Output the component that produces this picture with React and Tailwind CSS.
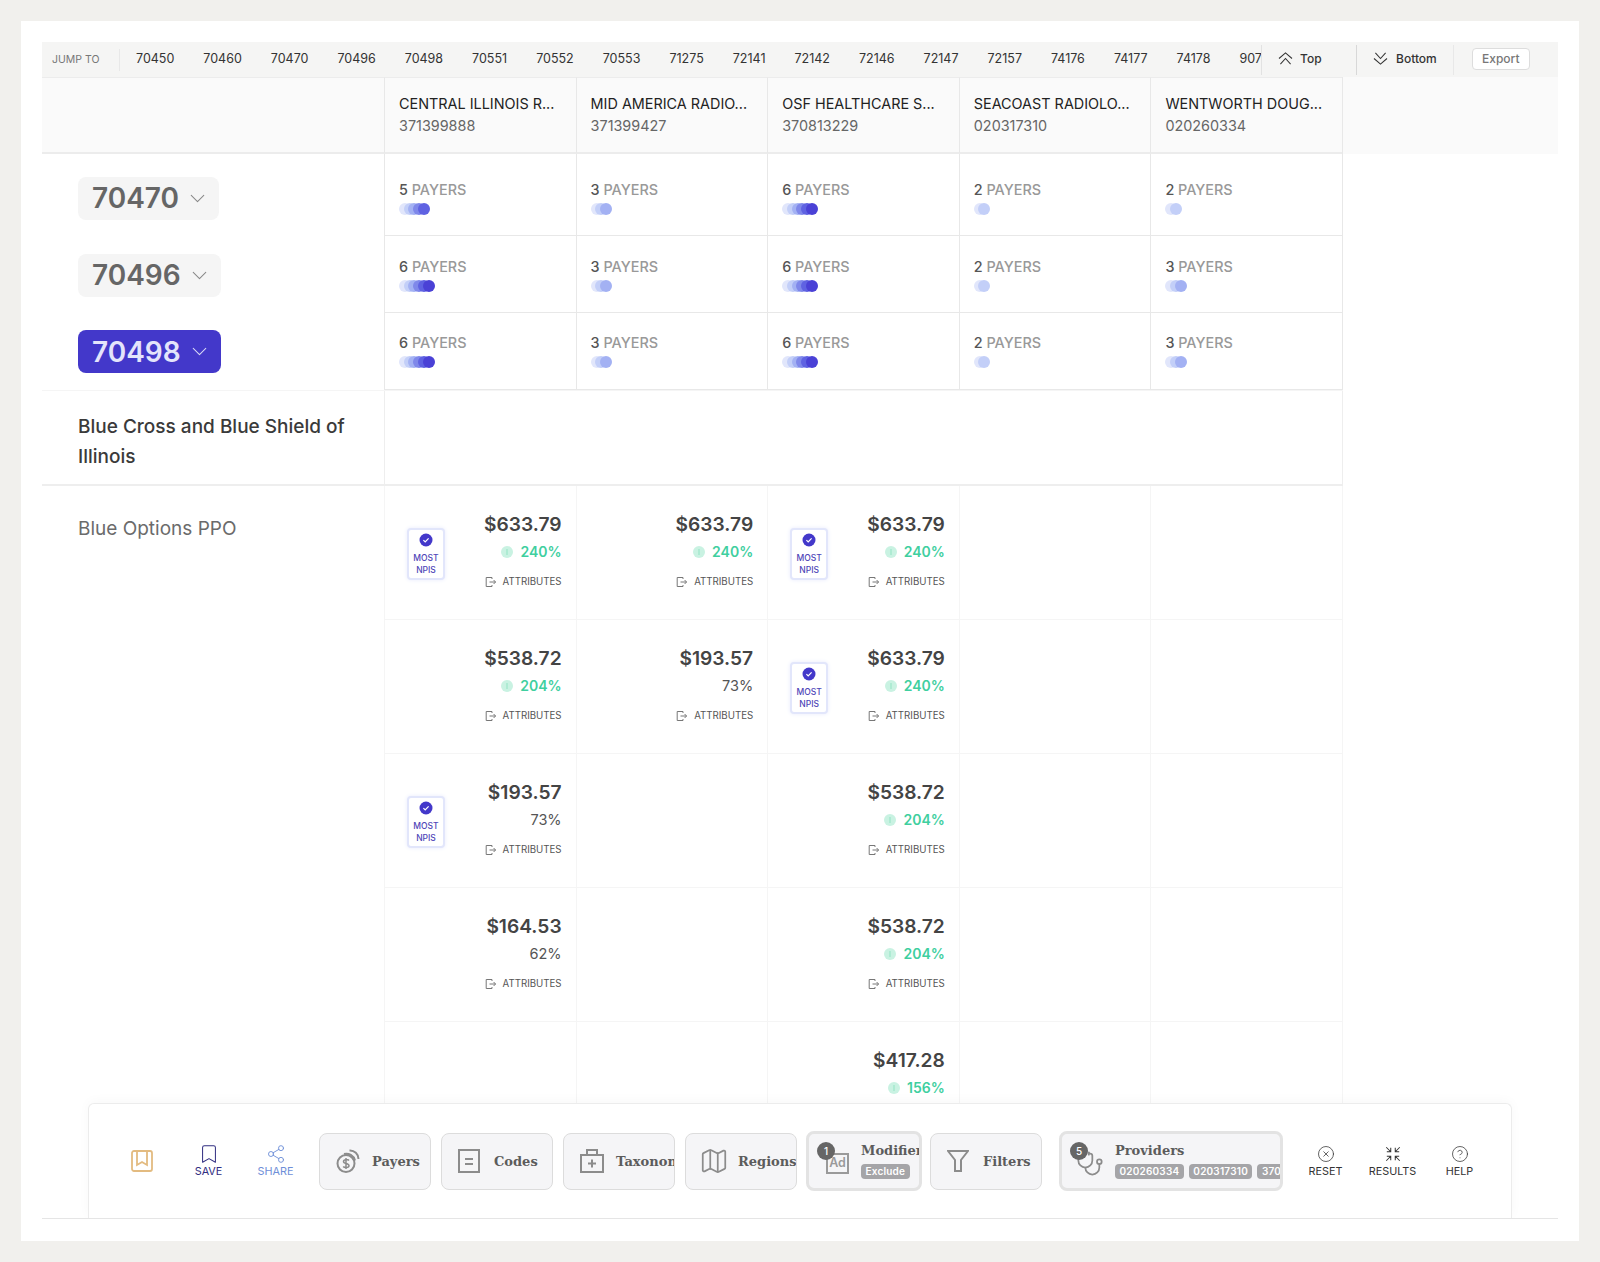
import React from "react";
import {
  Bookmark,
  ChevronDown,
  CircleHelp,
  CircleX,
  Map,
  Share2,
  Stethoscope,
} from "lucide-react";

const jumpCodes = [
  "70450", "70460", "70470", "70496", "70498", "70551", "70552", "70553", "71275", "72141",
  "72142", "72146", "72147", "72157", "74176", "74177", "74178", "90714",
];

const providers = [
  { name: "CENTRAL ILLINOIS R...", tin: "371399888" },
  { name: "MID AMERICA RADIO...", tin: "371399427" },
  { name: "OSF HEALTHCARE S...", tin: "370813229" },
  { name: "SEACOAST RADIOLO...", tin: "020317310" },
  { name: "WENTWORTH DOUG...", tin: "020260334" },
];

const codeRows = [
  { code: "70470", width: "w-[141px]", payers: [5, 3, 6, 2, 2], height: "h-[82px]", pillPad: "pt-[6px]", cellPad: "pt-[25px]" },
  { code: "70496", width: "w-[143px]", payers: [6, 3, 6, 2, 3], height: "h-[77px]", pillPad: "pt-[1px]", cellPad: "pt-[20px]" },
  { code: "70498", width: "w-[143px]", payers: [6, 3, 6, 2, 3], height: "h-[77px]", pillPad: "", cellPad: "pt-[19px]", active: true },
];

// one entry per column, null means no rate
const rates = [
  [
    { price: "$633.79", pct: "240%", good: true, npis: true },
    { price: "$633.79", pct: "240%", good: true },
    { price: "$633.79", pct: "240%", good: true, npis: true },
    null,
    null,
  ],
  [
    { price: "$538.72", pct: "204%", good: true },
    { price: "$193.57", pct: "73%" },
    { price: "$633.79", pct: "240%", good: true, npis: true },
    null,
    null,
  ],
  [
    { price: "$193.57", pct: "73%", npis: true },
    null,
    { price: "$538.72", pct: "204%", good: true },
    null,
    null,
  ],
  [
    { price: "$164.53", pct: "62%" },
    null,
    { price: "$538.72", pct: "204%", good: true },
    null,
    null,
  ],
  [null, null, { price: "$417.28", pct: "156%", good: true }, null, null],
];

const dotColors = [
  "bg-[#e1e6fb]",
  "bg-[#c3cff8]",
  "bg-[#a3b1f3]",
  "bg-[#7f88ea]",
  "bg-[#5f62e2]",
  "bg-[#4a41d6]",
];

const PayerDots = ({ count }) => (
  <div className="flex h-3">
    {dotColors.slice(0, count).map((color, i) => (
      <span key={i} className={`h-3 w-3 rounded-full ${color} ${i > 0 ? "-ml-[7.3px]" : ""}`} />
    ))}
  </div>
);

const RateCell = ({ rate }) => {
  if (!rate) return <div className="h-[134px] w-[191.6px] shrink-0 border-b border-l border-[#f5f5f5]" />;
  return (
    <div className="relative flex h-[134px] w-[191.6px] shrink-0 flex-col items-end border-b border-l border-[#f5f5f5] pt-[23px] pr-[14px]">
      {rate.npis && (
        <div className="absolute top-[42px] left-[22px] flex h-[52px] w-[38px] flex-col items-center rounded border-2 border-[#e2e6fb] bg-white pt-[3px] text-[8.5px] leading-[12px] font-medium text-[#4f46b8] shadow-[0_0_4px_#e8ebfc]">
          <svg viewBox="0 0 14 14" className="mb-[5px] h-[14px] w-[14px]">
            <circle cx="7" cy="7" r="6.5" fill="#4338ca" />
            <path d="M4.4 7.2l1.8 1.8 3.4-3.6" fill="none" stroke="#fff" strokeWidth="1.2" />
          </svg>
          <span>MOST</span>
          <span>NPIS</span>
        </div>
      )}
      <div className="text-[19.2px] leading-[30px] font-semibold text-[#444444]">{rate.price}</div>
      <div
        className={`mt-[1.5px] flex h-[22px] items-center gap-[7px] ${
          rate.good ? "text-[14px] font-semibold text-[#3fcf9f]" : "text-[14.5px] text-[#555555]"
        }`}
      >
        {rate.good && (
          <span className="flex h-[12px] w-[12px] items-center justify-center rounded-full bg-[#c9f2e2]">
            <span className="h-[6px] w-[2px] bg-[#aeebd3]" />
          </span>
        )}
        {rate.pct}
      </div>
      <div className="mt-[12.5px] flex items-center gap-[7px] text-[9.7px] leading-[14px] text-[#555555]">
        <svg viewBox="0 0 12 12" className="h-[12px] w-[12px]" fill="none" stroke="#777777" strokeWidth="1">
          <path d="M8 3V1.500H2.200v9H8V9" />
          <path d="M5.500 6h6M9.600 4l2 2-2 2" />
        </svg>
        ATTRIBUTES
      </div>
    </div>
  );
};

const ToolButton = ({ icon, label }) => (
  <div className="flex h-[57px] w-[112px] shrink-0 items-center overflow-hidden rounded-lg border border-[#dcdcdc] bg-[#f5f5f7] pl-[16px] font-['DejaVu_Serif',serif] text-[13px] font-bold text-[#5c5c5c]">
    <span className="flex w-[36px] shrink-0">{icon}</span>
    <span className="mt-[1px] whitespace-nowrap">{label}</span>
  </div>
);

const SmallAction = ({ icon, label, color }) => (
  <div className={`flex w-[67px] shrink-0 flex-col items-center text-[10.8px] leading-[14px] ${color}`}>
    <span className={label ? "flex h-[21px] items-center" : "flex items-center"}>{icon}</span>
    {label}
  </div>
);

const Badge = ({ n }) => (
  <span className="absolute top-[8px] left-[8px] z-10 flex h-[18px] w-[18px] items-center justify-center rounded-full bg-[#666666] font-['Inter',sans-serif] text-[10px] font-medium text-white">
    {n}
  </span>
);

const Tag = ({ children }) => (
  <span className="shrink-0 rounded-sm bg-[#a5a5a8] px-[4.5px] font-['Inter',sans-serif] text-[10px] leading-[15px] font-semibold tracking-[0.2px] text-white">
    {children}
  </span>
);

const App = () => {
  return (
    <div className="h-[1262px] w-[1600px] bg-[#f1f0ed] p-[21px] font-['Inter',sans-serif]">
      <div className="h-[1220px] w-[1558px] bg-white px-[21px] pt-[21px]">
        <div className="relative h-[1177px] w-[1516px] overflow-hidden border-b border-[#e5e5e5]">
          {/* Jump bar */}
          <div className="flex h-[35px] items-center bg-[#f5f5f4] text-[12.5px] text-[#333333]">
            <div className="flex h-[22px] w-[78px] shrink-0 items-center border-r border-[#e8e8e8] pl-[10px] text-[10.5px] text-[#777777]">
              JUMP TO
            </div>
            <div className="flex w-[1141px] shrink-0 gap-[29px] overflow-hidden pl-[16px]">
              {jumpCodes.map((code) => (
                <span key={code}>{code}</span>
              ))}
            </div>
            <div className="flex h-[30px] w-[95px] shrink-0 items-center gap-[7px] border-l border-[#e2e2e2] pb-[2px] pl-[16px] text-[12px] font-medium">
              <svg viewBox="0 0 16 14" className="h-[13px] w-[15px]" fill="none" stroke="#333333" strokeWidth="1.1">
                <path d="M1 7l7-6 7 6M2.500 13L8 7l5.500 6" />
              </svg>
              Top
            </div>
            <div className="flex h-[30px] w-[97px] shrink-0 items-center gap-[8px] border-l border-[#d8d8d8] pb-[2px] pl-[16px] text-[12px] font-medium">
              <svg viewBox="0 0 16 14" className="h-[13px] w-[15px]" fill="none" stroke="#333333" strokeWidth="1.1">
                <path d="M1 7l7 6 7-6M2.500 1L8 7l5.500-6" />
              </svg>
              Bottom
            </div>
            <div className="flex h-[30px] shrink-0 items-center border-l border-[#e8e8e8] pb-[2px] pl-[18px]">
              <span className="rounded border border-[#dddddd] bg-white px-[9px] text-[12px] leading-[20px] font-medium text-[#777777]">
                Export
              </span>
            </div>
          </div>

          {/* Provider header */}
          <div className="flex h-[77px] bg-[#fafafa]">
            <div className="w-[342px] shrink-0 border-t border-b-2 border-t-[#ececec] border-b-[#ececec]" />
            {providers.map((p) => (
              <div
                key={p.tin}
                className="w-[191.6px] shrink-0 border-t border-b-2 border-l border-t-[#ececec] border-b-[#ececec] border-l-[#e8e8e8] pt-[15px] pl-[14px] text-[14.4px] leading-[22px]"
              >
                <div className="text-[#222222]">{p.name}</div>
                <div className="text-[#666666]">{p.tin}</div>
              </div>
            ))}
            <div className="border-l border-[#e8e8e8]" />
          </div>

          {/* Code rows */}
          {codeRows.map((row) => (
            <div key={row.code} className={`flex ${row.height}`}>
              <div className={`flex w-[342px] shrink-0 items-center pl-[36px] ${row.pillPad}`}>
                <div
                  className={`flex h-[43px] items-center justify-between rounded-lg pr-[9px] pl-[14px] text-[28px] font-semibold ${row.width} ${
                    row.active ? "bg-[#4338ca] text-[#e4e4fb]" : "bg-[#f5f5f5] text-[#666666]"
                  }`}
                >
                  {row.code}
                  <ChevronDown size={25} strokeWidth={1} className={row.active ? "text-[#d8d8f6]" : "text-[#888888]"} />
                </div>
              </div>
              {row.payers.map((n, i) => (
                <div key={i} className={`w-[191.6px] shrink-0 border-b border-l border-[#e8e8e8] pl-[14px] ${row.cellPad}`}>
                  <div className="text-[14.4px] leading-[22px] font-medium text-[#999999]">
                    <span className="text-[#555555]">{n}</span> PAYERS
                  </div>
                  <div className="mt-[2px]">
                    <PayerDots count={n} />
                  </div>
                </div>
              ))}
              <div className="border-l border-[#e8e8e8]" />
            </div>
          ))}

          {/* Payer name */}
          <div className="flex h-[96px] w-[1301px] border-t border-b-2 border-t-[#f5f5f5] border-b-[#eeeeee]">
            <div className="w-[342px] shrink-0 pt-[21px] pl-[36px] text-[19px] leading-[29.5px] font-medium text-[#3a3a3a]">
              Blue Cross and Blue Shield of
              <br />
              Illinois
            </div>
            <div className="flex-1 border-r border-l border-[#eeeeee]" />
          </div>

          {/* Plan rates */}
          <div className="flex">
            <div className="w-[342px] shrink-0 pt-[29px] pl-[36px] text-[19px] leading-[28px] text-[#6b6b6b]">
              Blue Options PPO
            </div>
            <div>
              {rates.map((cells, r) => (
                <div key={r} className="flex">
                  {cells.map((rate, c) => (
                    <RateCell key={c} rate={rate} />
                  ))}
                  <div className="border-l border-[#f5f5f5]" />
                </div>
              ))}
            </div>
          </div>

          {/* Floating toolbar */}
          <div className="absolute right-[46px] bottom-0 left-[46px] flex h-[115px] items-center rounded-t-md border border-b-0 border-[#ececec] bg-white pl-[19px] shadow-[0_-2px_12px_rgba(0,0,0,0.03)]">
            <SmallAction
              label=""
              color="text-[#e0b36f]"
              icon={
                <svg viewBox="0 0 22 22" className="h-[22px] w-[22px]" fill="none" stroke="#e3bb80" strokeWidth="1.8">
                  <rect x="1" y="1" width="20" height="20" rx="2" />
                  <path d="M6 1v14l5-3 5 3V1" />
                </svg>
              }
            />
            <SmallAction label="SAVE" color="text-[#312e81]" icon={<Bookmark size={22} strokeWidth={1.1} />} />
            <SmallAction label="SHARE" color="text-[#6f8fd8]" icon={<Share2 size={20} strokeWidth={1.1} />} />
            <div className="ml-[10px] flex items-center gap-[10px]">
              <ToolButton
                label="Payers"
                icon={
                  <svg viewBox="0 0 24 24" className="h-[24px] w-[24px]" fill="none" stroke="#8c8c8c" strokeWidth="2">
                    <circle cx="10" cy="14.500" r="8.500" />
                    <path d="M8 5A9 9 0 0 1 19 11.500M13.500 1.500A8.500 8.500 0 0 1 22.500 10" />
                    <path d="M13 11.500c-1-1.200-5.500-1.400-5.500 1 0 2.700 5.500 1.400 5.500 4.200 0 2.400-4.800 2.200-5.800.8M10 9v11" strokeWidth="1.500" />
                  </svg>
                }
              />
              <ToolButton
                label="Codes"
                icon={
                  <svg viewBox="0 0 22 24" className="h-[24px] w-[22px]" fill="none" stroke="#8c8c8c" strokeWidth="2">
                    <rect x="1" y="1" width="20" height="22" />
                    <path d="M7 10h8M7 15h8" />
                  </svg>
                }
              />
              <ToolButton
                label="Taxonomy"
                icon={
                  <svg viewBox="0 0 24 24" className="h-[24px] w-[24px]" fill="none" stroke="#8c8c8c" strokeWidth="2">
                    <rect x="1" y="6" width="22" height="17" />
                    <path d="M7 6V1h10v5M12 10.500v8M8 14.500h8" />
                  </svg>
                }
              />
              <ToolButton label="Regions" icon={<Map size={30} strokeWidth={1.4} color="#8c8c8c" className="-my-[3px] -ml-[3px]" />} />
              <div className="relative -ml-[1px] flex h-[60px] w-[116px] shrink-0 items-center overflow-hidden rounded-lg border-[3px] border-[#e3e3e3] bg-[#f5f5f7] pl-[17px] font-['DejaVu_Serif',serif] text-[13px] font-bold text-[#5c5c5c]">
                <Badge n={1} />
                <span className="mt-[4px] flex h-[21px] w-[23px] shrink-0 items-center justify-center border-2 border-[#9a9a9a] font-['Inter',sans-serif] text-[12.5px] font-semibold text-[#9a9a9a]">
                  Ad
                </span>
                <div className="-mt-[2px] ml-[12px] flex flex-col items-start gap-[4px]">
                  <span className="leading-[18px] whitespace-nowrap">Modifiers</span>
                  <Tag>Exclude</Tag>
                </div>
              </div>
              <div className="-ml-[2px]">
                <ToolButton
                  label="Filters"
                  icon={
                    <svg viewBox="0 0 22 22" className="h-[22px] w-[22px]" fill="none" stroke="#8c8c8c" strokeWidth="2">
                      <path d="M1 1h20l-7 9v11H8V10z" />
                    </svg>
                  }
                />
              </div>
              <div className="relative ml-[7px] flex h-[60px] w-[224px] shrink-0 items-center overflow-hidden rounded-lg border-[3px] border-[#e3e3e3] bg-[#f5f5f7] pl-[14px] font-['DejaVu_Serif',serif] text-[13px] font-bold text-[#5c5c5c]">
                <Badge n={5} />
                <Stethoscope size={28} strokeWidth={1.5} color="#8c8c8c" className="mt-[6px] shrink-0" />
                <div className="-mt-[2px] ml-[11px] flex min-w-0 flex-col items-start gap-[4px]">
                  <span className="leading-[18px]">Providers</span>
                  <div className="flex gap-[5px]">
                    <Tag>020260334</Tag>
                    <Tag>020317310</Tag>
                    <Tag>370813229</Tag>
                  </div>
                </div>
              </div>
            </div>
            <div className="ml-[9px] flex text-[#333333]">
              <SmallAction label="RESET" color="" icon={<CircleX size={18} strokeWidth={1} />} />
              <SmallAction
                label="RESULTS"
                color=""
                icon={
                  <svg viewBox="0 0 16 16" className="h-[18px] w-[18px]" fill="none" stroke="#333333" strokeWidth="0.9">
                    <path d="M2 2l4 4M6 2.500V6H2.500M14 2l-4 4M10 2.500V6h3.500M2 14l4-4M6 13.500V10H2.500M14 14l-4-4M10 13.500V10h3.500" />
                  </svg>
                }
              />
              <SmallAction label="HELP" color="" icon={<CircleHelp size={18} strokeWidth={1} />} />
            </div>
          </div>
        </div>
      </div>
    </div>
  );
};

export default App;
